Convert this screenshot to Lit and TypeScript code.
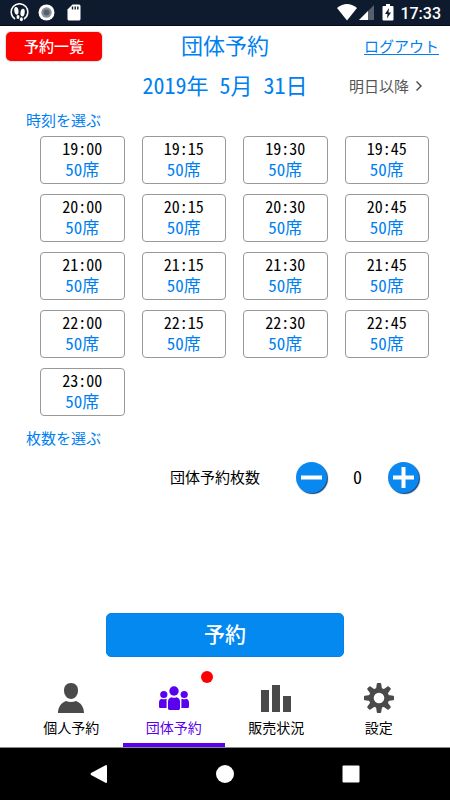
import { LitElement, html, css, svg } from "lit";
import { customElement, state } from "lit/decorators.js";
import { classMap } from "lit/directives/class-map.js";

const SLOTS = [
  "19:00", "19:15", "19:30", "19:45",
  "20:00", "20:15", "20:30", "20:45",
  "21:00", "21:15", "21:30", "21:45",
  "22:00", "22:15", "22:30", "22:45",
  "23:00",
];

const TEETH = [0, 45, 90, 135, 180, 225, 270, 315];

const personIcon = html`<svg class="icon" viewBox="0 0 30 30" aria-hidden="true">
  <path d="M15 0c4.600 0 7 3.200 7 7.500S19.200 16 15 16 8 11.800 8 7.500 10.400 0 15 0z" />
  <path d="M2 30c0-6 3.500-10.500 8-12 3 1.300 7 1.300 10 0 4.500 1.500 8 6 8 12z" />
</svg>`;

const groupIcon = html`<svg class="icon" viewBox="0 0 30 30" aria-hidden="true">
  <circle cx="15" cy="8" r="4.700" />
  <circle cx="4.800" cy="11.500" r="3.600" />
  <circle cx="25.200" cy="11.500" r="3.600" />
  <path d="M9 18.500c0-2.700 2-4 3.500-4.300 1.500.8 3.500.8 5 0 1.500.3 3.500 1.600 3.500 4.300V25c0 1.400-.6 2-2 2h-8c-1.400 0-2-.6-2-2z" />
  <path d="M0 19.500c0-2.300 1.200-3.500 2.700-3.800 1.200.7 3 .7 4.300 0 .4 0 .6.200.6.600V25h-6C.6 25 0 24.400 0 23.400z" />
  <path d="M30 19.500c0-2.300-1.200-3.500-2.700-3.800-1.200.7-3 .7-4.300 0-.4 0-.6.200-.6.600V25h6c1 0 1.600-.6 1.600-1.600z" />
</svg>`;

const chartIcon = html`<svg class="icon" viewBox="0 0 30 30" aria-hidden="true">
  <path d="M0 7h8v22H0zM11 2h8v27h-8zM22 13h8v16h-8z" />
</svg>`;

const gearIcon = html`<svg class="icon" viewBox="0 0 30 30" aria-hidden="true">
  ${TEETH.map((a) => svg`<path transform="rotate(${a} 15 15)" d="M12 6l.8-5.200q.1-.8.9-.8h2.600q.8 0 .9.800L18 6z" />`)}
  <path fill-rule="evenodd" d="M15 4.800a10.200 10.200 0 1 0 0 20.400 10.200 10.200 0 0 0 0-20.400zm0 4.900a5.300 5.300 0 1 1 0 10.600 5.300 5.300 0 0 1 0-10.600z" />
</svg>`;

const TABS = [
  { id: "personal", label: "個人予約", icon: personIcon },
  { id: "group", label: "団体予約", icon: groupIcon, badge: true },
  { id: "sales", label: "販売状況", icon: chartIcon },
  { id: "settings", label: "設定", icon: gearIcon },
];

@customElement("status-bar")
class StatusBar extends LitElement {
  static styles = css`
    :host {
      display: flex;
      align-items: center;
      justify-content: space-between;
      height: 26px;
      padding: 0 9px 0 10px;
      box-sizing: border-box;
      background: #0e1a2d;
      border-bottom: 1px solid #050a14;
      color: #fff;
      font: 500 16px/24px Roboto, sans-serif;
    }
    .side { display: flex; align-items: center; }
    .left { gap: 9px; }
    .signal { margin: 0 8px 0 2px; }
    .battery { margin-right: 6px; }
    svg { display: block; }
    .clock { padding-top: 2px; }
  `;

  render() {
    return html`
      <div class="side left">
        <svg width="19" height="19" viewBox="0 0 19 19" aria-hidden="true">
          <path d="M5 16A8.300 8.300 0 1 1 14 16" fill="none" stroke="#fff" stroke-width="1.500" />
          <ellipse cx="6.400" cy="7.800" rx="2.100" ry="3.900" fill="#fff" transform="rotate(-8 6.400 7.800)" />
          <ellipse cx="8" cy="14" rx="1.500" ry="1.900" fill="#fff" />
          <ellipse cx="12.600" cy="9.600" rx="2.100" ry="3.900" fill="#fff" transform="rotate(8 12.600 9.600)" />
          <ellipse cx="11.400" cy="16.200" rx="1.500" ry="2" fill="#fff" />
        </svg>
        <svg width="17" height="17" viewBox="0 0 17 17" aria-hidden="true">
          <circle cx="8.500" cy="8.500" r="8" fill="#fff" />
          <circle cx="8.500" cy="8.500" r="5.200" fill="#8b929c" />
          <circle cx="8.500" cy="8.500" r="3" fill="#566170" />
        </svg>
        <svg width="19" height="17" viewBox="0 0 19 17" aria-hidden="true">
          <path d="M8.500.5H15q1.500 0 1.500 1.500v13q0 1.500-1.500 1.500H5Q3.500 16.500 3.500 15V5.500z" fill="#fff" />
          <path d="M8.500 2.500v3M11.200 2.500v3M13.800 2.500v3" stroke="#0e1a2d" stroke-width="1.400" />
        </svg>
      </div>
      <div class="side">
        <svg width="20" height="17" viewBox="0 0 20 17" aria-hidden="true">
          <path d="M0 4q10-8 20 0L10 16.500z" fill="#fff" />
        </svg>
        <svg class="signal" width="15" height="15" viewBox="0 0 15 15" aria-hidden="true">
          <path d="M15 0v15H0z" fill="#555f6e" />
          <path d="M9 6v9H0z" fill="#fff" />
        </svg>
        <svg class="battery" width="12" height="17" viewBox="0 0 12 17" aria-hidden="true">
          <path d="M4 0h4v2h2.500q1 0 1 1v12.500q0 1-1 1h-9q-1 0-1-1V3q0-1 1-1H4z" fill="#fff" />
          <path d="M7 4L3 10h2.500L5 14.500l4-6H6.500z" fill="#0e1a2d" />
        </svg>
        <span class="clock">17:33</span>
      </div>
    `;
  }
}

@customElement("system-nav")
class SystemNav extends LitElement {
  static styles = css`
    :host {
      display: grid;
      grid-template-columns: repeat(3, 1fr);
      padding: 0 8%;
      height: 52px;
      background: #000;
    }
    button {
      display: flex;
      align-items: center;
      justify-content: center;
      border: 0;
      padding: 0;
      background: none;
    }
    svg { display: block; fill: #fff; }
  `;

  render() {
    return html`
      <button aria-label="戻る"><svg width="18" height="18" viewBox="0 0 18 18"><path d="M16 0q1 0 1 1v16q0 1-1 1L1 10q-1-1 0-2z" /></svg></button>
      <button aria-label="ホーム"><svg width="18" height="18" viewBox="0 0 18 18"><circle cx="9" cy="9" r="9" /></svg></button>
      <button aria-label="アプリ履歴"><svg width="18" height="18" viewBox="0 0 18 18"><rect x="0.500" y="0.500" width="17" height="17" rx="1" /></svg></button>
    `;
  }
}

@customElement("app-root")
class AppRoot extends LitElement {
  @state() private count = 0;
  @state() private slotTime = "";
  @state() private tab = "group";

  static styles = css`
    :host {
      display: flex;
      flex-direction: column;
      min-height: 100vh;
      background: #fff;
      color: #000;
      font-family: "Noto Sans CJK JP", sans-serif;
      font-feature-settings: "hwid";
      font-size: 16px;
      line-height: 20px;
    }
    button {
      font: inherit;
      font-feature-settings: inherit;
      color: inherit;
      padding: 0;
      cursor: pointer;
      box-sizing: border-box;
    }
    h1, h2, p { margin: 0; font-weight: 400; }
    .bar {
      display: grid;
      grid-template-columns: 1fr auto 1fr;
      align-items: center;
      height: 40px;
      padding: 0 6px;
    }
    .list {
      justify-self: start;
      width: 96px;
      height: 29px;
      border: 0;
      border-radius: 5px;
      background: #f00;
      box-shadow: 0 0 2px #999;
      color: #fff;
      font-size: 15px;
      font-weight: 500;
    }
    .title, .date {
      padding-bottom: 4px;
      font-size: 22px;
      line-height: 32px;
      color: #0080f0;
    }
    .logout {
      justify-self: end;
      margin-right: 5px;
      color: #0080f0;
      font-size: 15px;
      line-height: 16px;
      text-decoration: none;
      border-bottom: 1px solid #0080f0;
    }
    .date { grid-column: 2; white-space: pre; }
    .next {
      justify-self: end;
      display: flex;
      align-items: center;
      gap: 6px;
      margin-right: 21px;
      border: 0;
      background: none;
      font-size: 15px;
      color: #555;
    }
    .heading { padding-left: 26px; font-size: 15px; line-height: 20px; color: #0080f0; }
    .first { margin-top: 4px; }
    .slots {
      display: grid;
      grid-template-columns: repeat(4, 1fr);
      gap: 10px 17px;
      padding: 6px 21px 12px 40px;
    }
    .slot {
      display: flex;
      flex-direction: column;
      align-items: center;
      justify-content: center;
      height: 48px;
      padding-bottom: 4px;
      border: 1px solid #999;
      border-radius: 4px;
      background: #fff;
    }
    .slot.on { background: #e3f1fe; }
    .time { line-height: 22px; }
    .seats { font-size: 17px; line-height: 20px; color: #0080f0; }
    .stepper {
      display: flex;
      align-items: center;
      justify-content: flex-end;
      padding: 14px 31px 0 0;
    }
    .stepper label { margin-right: 36px; padding-bottom: 2px; font-size: 15px; }
    .round {
      display: flex;
      align-items: center;
      justify-content: center;
      width: 31px;
      height: 31px;
      border: 0;
      border-radius: 50%;
      background: #0a88f2;
      box-shadow: 1px 1px 1px #173f6b;
    }
    .stepper output { width: 61px; padding-bottom: 4px; text-align: center; font-size: 18px; }
    .reserve {
      align-self: center;
      width: 53%;
      height: 44px;
      margin-top: auto;
      padding-bottom: 4px;
      border: 1px solid #0a80e4;
      border-radius: 5px;
      background: #0489f1;
      color: #fff;
      font-size: 21px;
      font-weight: 500;
    }
    .tabs {
      display: grid;
      grid-template-columns: repeat(4, 1fr);
      padding: 0 20px;
      margin-top: 8px;
      border-bottom: 1px solid #888;
    }
    .tab {
      position: relative;
      display: flex;
      flex-direction: column;
      align-items: center;
      gap: 4px;
      height: 82px;
      padding-top: 18px;
      border: 0;
      border-bottom: 4px solid transparent;
      background: none;
      font-size: 14px;
    }
    .tab.on { color: #5a00ee; border-color: #5a00ee; }
    .icon { display: block; width: 30px; height: 30px; fill: #4a4a4a; }
    .tab.on .icon { fill: #5a00ee; }
    .dot {
      position: absolute;
      top: 6px;
      right: 12px;
      width: 12px;
      height: 12px;
      border-radius: 50%;
      background: #f00;
    }
  `;

  render() {
    return html`
      <status-bar></status-bar>
      <header>
        <div class="bar">
          <button class="list">予約一覧</button>
          <h1 class="title">団体予約</h1>
          <a class="logout" href="#logout">ログアウト</a>
        </div>
        <div class="bar">
          <p class="date">2019年 5月 31日</p>
          <button class="next">
            明日以降
            <svg width="8" height="12" viewBox="0 0 8 12" aria-hidden="true">
              <path d="M1.500 1.500L6 6l-4.500 4.500" fill="none" stroke="#444" stroke-width="1.400" />
            </svg>
          </button>
        </div>
      </header>
      <main>
        <h2 class="heading first">時刻を選ぶ</h2>
        <div class="slots">
          ${SLOTS.map((time) => html`
            <button
              class=${classMap({ slot: true, on: this.slotTime === time })}
              @click=${() => (this.slotTime = time)}
            >
              <span class="time">${time}</span>
              <span class="seats">50席</span>
            </button>
          `)}
        </div>
        <h2 class="heading">枚数を選ぶ</h2>
        <div class="stepper">
          <label for="count">団体予約枚数</label>
          <button class="round" aria-label="減らす" @click=${() => (this.count = Math.max(0, this.count - 1))}>
            <svg width="21" height="21" viewBox="0 0 21 21"><path d="M0 8.500h21v4H0z" fill="#fff" /></svg>
          </button>
          <output id="count">${this.count}</output>
          <button class="round" aria-label="増やす" @click=${() => (this.count += 1)}>
            <svg width="21" height="21" viewBox="0 0 21 21"><path d="M0 8.500h8.500V0h4v8.500H21v4h-8.500V21h-4v-8.500H0z" fill="#fff" /></svg>
          </button>
        </div>
      </main>
      <button class="reserve">予約</button>
      <nav class="tabs">
        ${TABS.map((t) => html`
          <button
            class=${classMap({ tab: true, on: this.tab === t.id })}
            @click=${() => (this.tab = t.id)}
          >
            ${t.icon}
            <span>${t.label}</span>
            ${t.badge ? html`<span class="dot"></span>` : null}
          </button>
        `)}
      </nav>
      <system-nav></system-nav>
    `;
  }
}
